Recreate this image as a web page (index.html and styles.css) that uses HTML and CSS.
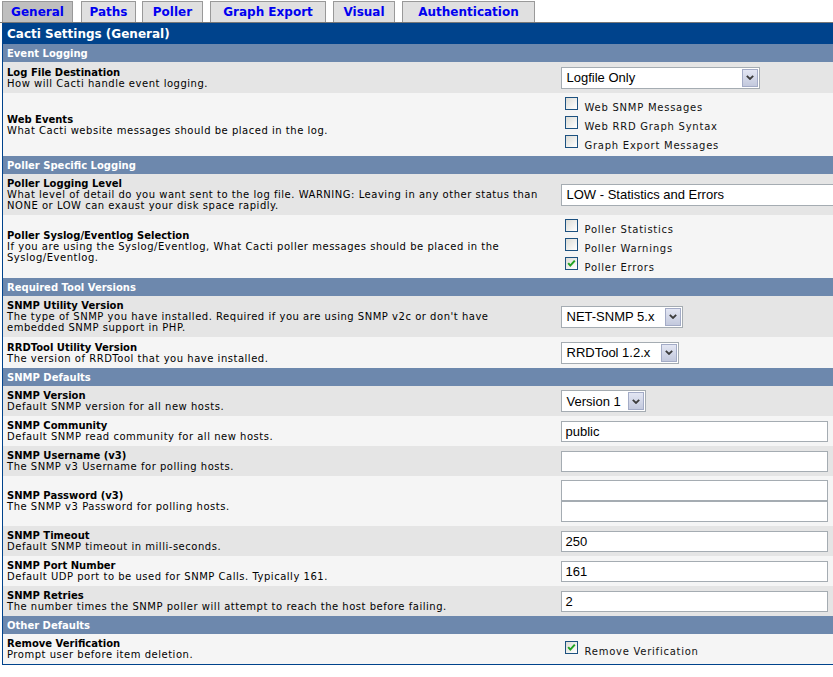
FILE: index.html
```html
<!DOCTYPE html>
<html>
<head>
<meta charset="utf-8">
<title>Cacti Settings (General)</title>
<link rel="stylesheet" href="styles.css">
</head>
<body>
<div class="page">
  <nav class="tabs">
    <span class="tab tab-general tab-active">General</span>
    <span class="tab tab-paths">Paths</span>
    <span class="tab tab-poller">Poller</span>
    <span class="tab tab-graph">Graph Export</span>
    <span class="tab tab-visual">Visual</span>
    <span class="tab tab-auth">Authentication</span>
  </nav>
  <table class="settings">
    <colgroup><col class="col-desc"><col class="col-ctrl"></colgroup>
    <tr><td colspan="2" class="title">Cacti Settings (General)</td></tr>
    <tr><td colspan="2" class="section">Event Logging</td></tr>
    <tr class="row-dark row-31">
      <td class="desc"><span class="label">Log File Destination</span><br>How will Cacti handle event logging.</td>
      <td class="ctrl"><div class="select select-log"><span class="select-text">Logfile Only</span><span class="select-arrow"><svg width="8" height="5" viewBox="0 0 8 5"><path d="M0.8 0.8 L4 4 L7.2 0.8" fill="none" stroke="#3c3c3c" stroke-width="1.8"/></svg></span></div></td>
    </tr>
    <tr class="row-light">
      <td class="desc"><span class="label">Web Events</span><br>What Cacti website messages should be placed in the log.</td>
      <td class="ctrl ctrl-checks">
        <div class="check"><span class="box"></span><span class="check-label">Web SNMP Messages</span></div>
        <div class="check"><span class="box"></span><span class="check-label">Web RRD Graph Syntax</span></div>
        <div class="check"><span class="box"></span><span class="check-label">Graph Export Messages</span></div>
      </td>
    </tr>
    <tr><td colspan="2" class="section">Poller Specific Logging</td></tr>
    <tr class="row-dark">
      <td class="desc"><span class="label">Poller Logging Level</span><br>What level of detail do you want sent to the log file. WARNING: Leaving in any other status than<br>NONE or LOW can exaust your disk space rapidly.</td>
      <td class="ctrl"><div class="select select-level"><span class="select-text">LOW - Statistics and Errors</span></div></td>
    </tr>
    <tr class="row-light">
      <td class="desc"><span class="label">Poller Syslog/Eventlog Selection</span><br>If you are using the Syslog/Eventlog, What Cacti poller messages should be placed in the<br>Syslog/Eventlog.</td>
      <td class="ctrl ctrl-checks">
        <div class="check"><span class="box"></span><span class="check-label">Poller Statistics</span></div>
        <div class="check"><span class="box"></span><span class="check-label">Poller Warnings</span></div>
        <div class="check"><span class="box box-checked"><svg width="11" height="11" viewBox="0 0 11 11"><path d="M2.2 5.2 L4.3 7.6 L8.8 2.6" fill="none" stroke="#22a322" stroke-width="2"/></svg></span><span class="check-label">Poller Errors</span></div>
      </td>
    </tr>
    <tr><td colspan="2" class="section">Required Tool Versions</td></tr>
    <tr class="row-dark">
      <td class="desc"><span class="label">SNMP Utility Version</span><br>The type of SNMP you have installed. Required if you are using SNMP v2c or don't have<br>embedded SNMP support in PHP.</td>
      <td class="ctrl"><div class="select select-snmp"><span class="select-text">NET-SNMP 5.x</span><span class="select-arrow"><svg width="8" height="5" viewBox="0 0 8 5"><path d="M0.8 0.8 L4 4 L7.2 0.8" fill="none" stroke="#3c3c3c" stroke-width="1.8"/></svg></span></div></td>
    </tr>
    <tr class="row-light row-31">
      <td class="desc"><span class="label">RRDTool Utility Version</span><br>The version of RRDTool that you have installed.</td>
      <td class="ctrl"><div class="select select-rrd"><span class="select-text">RRDTool 1.2.x</span><span class="select-arrow"><svg width="8" height="5" viewBox="0 0 8 5"><path d="M0.8 0.8 L4 4 L7.2 0.8" fill="none" stroke="#3c3c3c" stroke-width="1.8"/></svg></span></div></td>
    </tr>
    <tr><td colspan="2" class="section">SNMP Defaults</td></tr>
    <tr class="row-dark">
      <td class="desc"><span class="label">SNMP Version</span><br>Default SNMP version for all new hosts.</td>
      <td class="ctrl"><div class="select select-ver"><span class="select-text">Version 1</span><span class="select-arrow"><svg width="8" height="5" viewBox="0 0 8 5"><path d="M0.8 0.8 L4 4 L7.2 0.8" fill="none" stroke="#3c3c3c" stroke-width="1.8"/></svg></span></div></td>
    </tr>
    <tr class="row-light">
      <td class="desc"><span class="label">SNMP Community</span><br>Default SNMP read community for all new hosts.</td>
      <td class="ctrl"><div class="text-input">public</div></td>
    </tr>
    <tr class="row-dark">
      <td class="desc"><span class="label">SNMP Username (v3)</span><br>The SNMP v3 Username for polling hosts.</td>
      <td class="ctrl"><div class="text-input"></div></td>
    </tr>
    <tr class="row-light">
      <td class="desc"><span class="label">SNMP Password (v3)</span><br>The SNMP v3 Password for polling hosts.</td>
      <td class="ctrl"><div class="text-input"></div><div class="text-input"></div></td>
    </tr>
    <tr class="row-dark">
      <td class="desc"><span class="label">SNMP Timeout</span><br>Default SNMP timeout in milli-seconds.</td>
      <td class="ctrl"><div class="text-input">250</div></td>
    </tr>
    <tr class="row-light">
      <td class="desc"><span class="label">SNMP Port Number</span><br>Default UDP port to be used for SNMP Calls. Typically 161.</td>
      <td class="ctrl"><div class="text-input">161</div></td>
    </tr>
    <tr class="row-dark">
      <td class="desc"><span class="label">SNMP Retries</span><br>The number times the SNMP poller will attempt to reach the host before failing.</td>
      <td class="ctrl"><div class="text-input">2</div></td>
    </tr>
    <tr><td colspan="2" class="section">Other Defaults</td></tr>
    <tr class="row-light">
      <td class="desc"><span class="label">Remove Verification</span><br>Prompt user before item deletion.</td>
      <td class="ctrl ctrl-checks">
        <div class="check"><span class="box box-checked"><svg width="11" height="11" viewBox="0 0 11 11"><path d="M2.2 5.2 L4.3 7.6 L8.8 2.6" fill="none" stroke="#22a322" stroke-width="2"/></svg></span><span class="check-label">Remove Verification</span></div>
      </td>
    </tr>
  </table>
</div>
</body>
</html>
```
FILE: styles.css
```css
html, body {
  margin: 0;
  padding: 0;
  background: #ffffff;
  overflow: hidden;
}
body {
  font-family: "DejaVu Sans", Verdana, sans-serif;
  font-size: 10px;
  color: #000000;
}
.page {
  width: 900px;
}
.tabs {
  display: flex;
  gap: 7px;
  padding: 1px 0 0 2px;
  height: 21px;
  border-bottom: 1px solid #777777;
  width: 831px;
}
.tab {
  box-sizing: border-box;
  height: 21px;
  border: 1px solid #999999;
  border-bottom: none;
  background: #e0e0e0;
  color: #0000f0;
  font-weight: bold;
  font-size: 12px;
  display: flex;
  align-items: center;
  justify-content: center;
}
.tab-active { background: #bfbfbf; }
.tab-general { width: 71px; }
.tab-paths { width: 55px; margin-left: 1px; margin-right: -1px; }
.tab-poller { width: 61px; }
.tab-graph { width: 116px; }
.tab-visual { width: 62px; }
.tab-auth { width: 133px; }

.settings {
  margin-left: 2px;
  border-collapse: collapse;
  table-layout: fixed;
  width: 880px;
  border-left: 1px solid #00438c;
  border-bottom: 1px solid #00438c;
}
.col-desc { width: 554px; }
.settings td {
  padding: 0;
  vertical-align: middle;
}
.settings td.title {
  background: #00438c;
  color: #ffffff;
  font-weight: bold;
  font-size: 12px;
  height: 21px;
  padding: 0 4px;
}
.settings td.section {
  background: #6d88ad;
  color: #ffffff;
  font-weight: bold;
  font-size: 10px;
  height: 18px;
  padding: 0 4px;
}
.row-dark { background: #e5e5e5; }
.row-light { background: #f5f5f5; }
.settings td.desc {
  padding: 4px;
  line-height: 11px;
  white-space: nowrap;
  height: 22px;
  letter-spacing: 0.52px;
}
.row-31 td.desc { height: 23px; }
.label { font-weight: bold; letter-spacing: 0; }
.settings td.ctrl {
  padding: 4px;
}
.settings td.ctrl-checks {
  padding: 3px 4px;
}

.select {
  box-sizing: border-box;
  display: flex;
  align-items: center;
  height: 22px;
  border: 1px solid #a5acb2;
  background: #ffffff;
  font-family: "Liberation Sans", Arial, sans-serif;
  font-size: 13px;
  padding-left: 5px;
}
.select-text { flex: 1; white-space: nowrap; }
.select-log { width: 199px; }
.select-level { width: 300px; }
.select-snmp { width: 122px; }
.select-rrd { width: 118px; }
.select-ver { width: 85px; }
.select-arrow {
  box-sizing: border-box;
  width: 16px;
  height: 18px;
  margin-right: 1px;
  border: 1px solid #a3abc6;
  background: linear-gradient(#e3e6f3, #c3c9dd);
  display: flex;
  align-items: center;
  justify-content: center;
}
.select-arrow svg { display: block; }

.text-input {
  box-sizing: border-box;
  width: 267px;
  height: 21px;
  border: 1px solid #a5acb2;
  background: #ffffff;
  font-family: "Liberation Sans", Arial, sans-serif;
  font-size: 13px;
  line-height: 19px;
  padding: 0 4px;
}

.check {
  display: flex;
  align-items: flex-start;
  height: 19px;
}
.box {
  box-sizing: border-box;
  width: 13px;
  height: 13px;
  margin: 1px 7px 0 4px;
  border: 1px solid #1c5180;
  background: linear-gradient(135deg, #dcdcd6, #ffffff);
  display: flex;
  align-items: center;
  justify-content: center;
}
.box svg { display: block; }
.check-label {
  font-size: 10px;
  letter-spacing: 0.75px;
  color: #111111;
  line-height: 12px;
  padding-top: 6px;
  white-space: nowrap;
}
```
